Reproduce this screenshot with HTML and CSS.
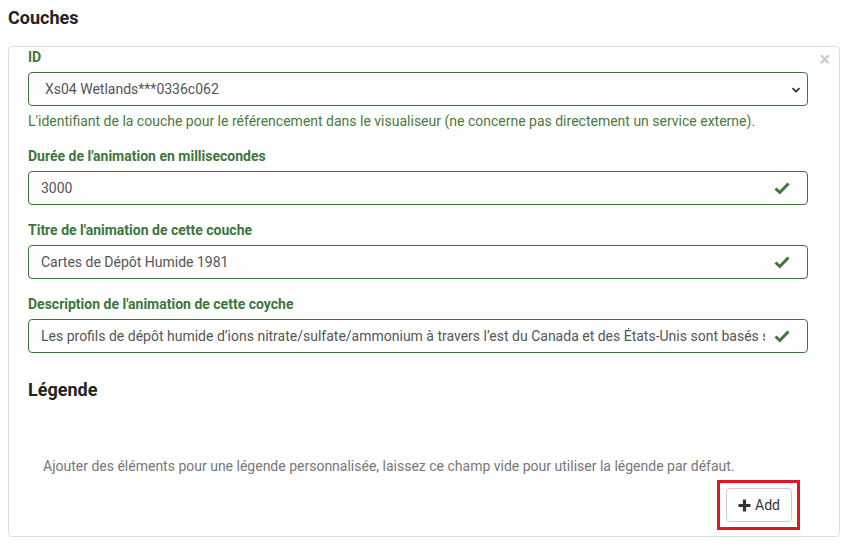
FILE: index.html
```html
<!DOCTYPE html>
<html lang="fr">
<head>
<meta charset="utf-8">
<title>Couches</title>
<link rel="stylesheet" href="styles.css">
</head>
<body>
<div class="page">
  <h4 class="title">Couches</h4>
  <div class="panel">
    <span class="close">×</span>
    <div class="group">
      <label class="label">ID</label>
      <div class="select">
        <span>Xs04 Wetlands***0336c062</span>
        <svg class="chev" width="10" height="8" viewBox="0 0 10 8"><path d="M1.5 2.2 L5 5.6 L8.5 2.2" fill="none" stroke="#333" stroke-width="1.8"/></svg>
      </div>
      <p class="help">L'identifiant de la couche pour le référencement dans le visualiseur (ne concerne pas directement un service externe).</p>
    </div>
    <div class="group">
      <label class="label">Durée de l'animation en millisecondes</label>
      <div class="feedback">
        <input class="control" type="text" value="3000" readonly>
        <svg class="ok" width="16" height="14" viewBox="0 0 16 14"><path d="M1.5 7.5 L5.8 11.5 L14.5 2.5" fill="none" stroke="#3c763d" stroke-width="3"/></svg>
      </div>
    </div>
    <div class="group">
      <label class="label">Titre de l'animation de cette couche</label>
      <div class="feedback">
        <input class="control" type="text" value="Cartes de Dépôt Humide 1981" readonly>
        <svg class="ok" width="16" height="14" viewBox="0 0 16 14"><path d="M1.5 7.5 L5.8 11.5 L14.5 2.5" fill="none" stroke="#3c763d" stroke-width="3"/></svg>
      </div>
    </div>
    <div class="group">
      <label class="label">Description de l'animation de cette coyche</label>
      <div class="feedback">
        <input class="control" type="text" value="Les profils de dépôt humide d’ions nitrate/sulfate/ammonium à travers l’est du Canada et des États-Unis sont basés sur des mesures" readonly>
        <svg class="ok" width="16" height="14" viewBox="0 0 16 14"><path d="M1.5 7.5 L5.8 11.5 L14.5 2.5" fill="none" stroke="#3c763d" stroke-width="3"/></svg>
      </div>
    </div>
    <h4 class="subtitle">Légende</h4>
    <div class="legend">
      <p class="muted">Ajouter des éléments pour une légende personnalisée, laissez ce champ vide pour utiliser la légende par défaut.</p>
      <div class="actions">
        <span class="highlight">
          <button class="btn" type="button">
            <svg width="13" height="13" viewBox="0 0 13 13"><path d="M6.5 0.5 V12.5 M0.5 6.5 H12.5" stroke="#333" stroke-width="3.2"/></svg>
            <span>Add</span>
          </button>
        </span>
      </div>
    </div>
  </div>
</div>
</body>
</html>
```

FILE: styles.css
```css
* { box-sizing: border-box; }
html, body { margin: 0; padding: 0; background: #fff; }
body {
  font-family: Roboto, "Liberation Sans", Arial, sans-serif;
  font-size: 14px;
  line-height: 20px;
  color: #333;
}
.page { padding: 0 8px; width: 847px; }
.title {
  margin: 0;
  padding-top: 8px;
  font-size: 18px;
  line-height: 20px;
  font-weight: 700;
  color: #222;
}
.panel {
  position: relative;
  margin-top: 18px;
  width: 832px;
  border: 1px solid #ddd;
  border-radius: 4px;
  padding: 0 31px 6px 19px;
}
.close {
  position: absolute;
  top: 2px;
  right: 9px;
  font-size: 20px;
  font-weight: 700;
  line-height: 20px;
  color: #000;
  opacity: 0.2;
}
.group { margin-bottom: 15px; }
.label {
  display: block;
  font-weight: 700;
  color: #3c763d;
  margin-bottom: 5px;
  line-height: 20px;
}
.select {
  position: relative;
  height: 34px;
  border: 1px solid #3c763d;
  border-radius: 4px;
  padding: 6px 12px 6px 16px;
  color: #555;
  display: flex;
  align-items: center;
}
.chev { position: absolute; right: 6px; top: 13px; }
.help {
  margin: 5px 0 0;
  color: #4a7a3c;
}
.feedback { position: relative; }
.control {
  display: block;
  width: 100%;
  height: 34px;
  border: 1px solid #3c763d;
  border-radius: 4px;
  padding: 6px 42px 6px 12px;
  font: inherit;
  color: #555;
  background: #fff;
  outline: none;
}
.ok { position: absolute; right: 18px; top: 10px; }
.subtitle {
  margin: 27px 0 0;
  font-size: 18px;
  line-height: 20px;
  font-weight: 700;
  color: #222;
}
.legend { padding: 0 15px; }
.muted {
  margin: 56px 0 0;
  color: #777;
}
.actions {
  display: flex;
  justify-content: flex-end;
  margin-top: 4px;
  margin-right: -7px;
}
.highlight {
  display: block;
  border: 3px solid #e3151f;
  padding: 5px 5px 5px 6px;
}
.btn {
  display: flex;
  align-items: center;
  gap: 4px;
  height: 34px;
  padding: 6px 11px;
  border: 1px solid #ccc;
  border-radius: 4px;
  background: #fff;
  font: inherit;
  color: #333;
}
```
